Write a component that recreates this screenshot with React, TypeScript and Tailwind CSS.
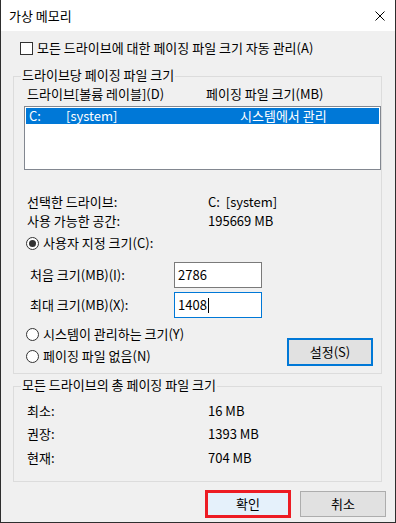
import React from 'react';

const font = "font-['Noto_Sans_CJK_KR','Noto_Sans',sans-serif]";

function Radio({ checked, label }: { checked?: boolean; label: string }) {
  return (
    <div className="flex h-4 items-center">
      <span className="flex h-[13px] w-[13px] items-center justify-center rounded-full border border-[#333333] bg-white">
        {checked && <span className="h-[7px] w-[7px] rounded-full bg-[#333333]" />}
      </span>
      <span className="ml-[4px] leading-4">{label}</span>
    </div>
  );
}

function InfoRow({ label, value, className }: { label: string; value: string; className?: string }) {
  return (
    <div className={`flex h-4 items-center pl-[13px] leading-4 ${className ?? ''}`}>
      <span className="w-[181px] shrink-0">{label}</span>
      <span className="whitespace-pre">{value}</span>
    </div>
  );
}

function SizeInput({ label, value, focused, className }: { label: string; value: string; focused?: boolean; className?: string }) {
  return (
    <div className={`flex items-center pl-[16px] ${className ?? ''}`}>
      <span className="w-[144px] shrink-0 leading-4">{label}</span>
      <div
        className={`flex h-[26px] w-[88px] items-center border bg-white pl-[3px] ${
          focused ? 'border-[#0078d7]' : 'border-[#7a7a7a]'
        }`}
      >
        <span className="leading-4">{value}</span>
        {focused && <span className="ml-px h-[15px] w-px bg-black" />}
      </div>
    </div>
  );
}

export default function App() {
  return (
    <div
      className={`flex h-[523px] w-[396px] flex-col border-x border-b border-[#2e2e2e] bg-[#f0f0f0] text-[13px] text-black ${font}`}
    >
      {/* title bar */}
      <div className="flex h-[31px] shrink-0 items-center justify-between bg-white pl-2 pr-[10px]">
        <span className="leading-4">가상 메모리</span>
        <svg width="10" height="10" viewBox="0 0 10 10" className="block">
          <path d="M0.5 0.5 L9.5 9.5 M9.5 0.5 L0.5 9.5" stroke="#000" strokeWidth="1" />
        </svg>
      </div>

      {/* auto manage */}
      <div className="ml-[19px] mt-[9px] flex h-4 items-center">
        <span className="h-[13px] w-[13px] border border-[#333333] bg-white" />
        <span className="ml-[4px] leading-4">모든 드라이브에 대한 페이징 파일 크기 자동 관리(A)</span>
      </div>

      {/* per-drive group */}
      <fieldset className="ml-[12px] mt-[11px] w-[369px] border border-[#dcdcdc] pb-[7px]">
        <legend className="ml-[7px] px-px pb-[3px] leading-4">드라이브당 페이징 파일 크기</legend>
        <div className="flex h-4 items-center pl-[13px] leading-4">
          <span className="w-[179px] shrink-0">드라이브[볼륨 레이블](D)</span>
          <span>페이징 파일 크기(MB)</span>
        </div>
        <div className="ml-[10px] mt-[4px] h-[64px] w-[357px] border border-[#828790] bg-white p-px">
          <div className="flex h-4 items-center bg-[#0078d7] pl-[3px] leading-4 text-white">
            <span className="w-[37px]">C:</span>
            <span className="w-[174px]">[system]</span>
            <span>시스템에서 관리</span>
          </div>
        </div>
        <InfoRow className="mt-[24px]" label="선택한 드라이브:" value="C:  [system]" />
        <InfoRow className="mt-[3px]" label="사용 가능한 공간:" value="195669 MB" />
        <div className="ml-[12px] mt-[6px]">
          <Radio checked label="사용자 지정 크기(C):" />
        </div>
        <SizeInput className="mt-[11px]" label="처음 크기(MB)(I):" value="2786" />
        <SizeInput className="mt-[4px]" label="최대 크기(MB)(X):" value="1408" focused />
        <div className="mt-[8px] flex items-start justify-between pl-[12px] pr-[8px]">
          <div className="flex flex-col gap-[6px]">
            <Radio label="시스템이 관리하는 크기(Y)" />
            <Radio label="페이징 파일 없음(N)" />
          </div>
          <button className="mt-[12px] flex h-[28px] w-[86px] items-center justify-center border-2 border-[#0078d7] bg-[#e1e1e1] leading-4">
            설정(S)
          </button>
        </div>
      </fieldset>

      {/* totals group */}
      <fieldset className="ml-[12px] mt-[3px] w-[369px] border border-[#dcdcdc] pb-[15px]">
        <legend className="ml-[7px] px-px pb-[3px] leading-4">모든 드라이브의 총 페이징 파일 크기</legend>
        <InfoRow className="mt-[7px]" label="최소:" value="16 MB" />
        <InfoRow className="mt-[7px]" label="권장:" value="1393 MB" />
        <InfoRow className="mt-[8px]" label="현재:" value="704 MB" />
      </fieldset>

      {/* buttons */}
      <div className="mr-[9px] mt-[8px] flex items-start justify-end gap-[9px]">
        <button className="flex h-[28px] w-[86px] items-center justify-center border-[3px] border-[#ed1c24] bg-[#e5f1fb] leading-4">
          확인
        </button>
        <button className="mt-px flex h-[26px] w-[86px] items-center justify-center border border-[#adadad] bg-[#e1e1e1] leading-4">
          취소
        </button>
      </div>
    </div>
  );
}
